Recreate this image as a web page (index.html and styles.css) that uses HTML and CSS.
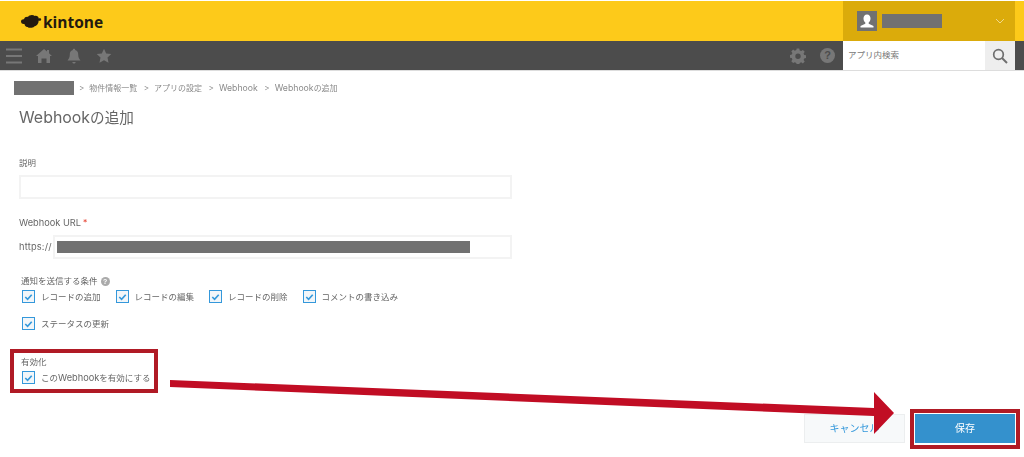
FILE: index.html
```html
<!DOCTYPE html>
<html lang="ja">
<head>
<meta charset="utf-8">
<title>Webhookの追加</title>
<link rel="stylesheet" href="styles.css">
</head>
<body>
<header class="topbar">
  <div class="logo">
    <svg class="logo-mark" viewBox="0 0 22 15" width="22" height="15"><path d="M1 7.500C1 5.700 2.800 5 4 5.300 4.300 3.300 6.500 2.500 8 3 9 .9 13 .4 14.800 2c2-.6 3.800.7 3.900 2.500.9-.5 2.500-.4 2.500.9s-1.600 1.700-2.500 1.200c-.1 3-1.800 5.500-4.500 5.800-1.400 1.800-5.200 1.900-6.500.5-1.800.2-3.200-1.500-3.200-3C3 10.400 1 9.500 1 7.500z" fill="#231a10"/></svg>
    <span class="logo-text">kintone</span>
  </div>
  <div class="user">
    <span class="avatar"><svg viewBox="0 0 20 20" width="20" height="20"><path d="M10 3.500c2.300 0 3.500 1.800 3.500 3.900 0 1.700-.8 3.300-1.800 4.100v1.300l4.800 2.200v1.500h-13v-1.500l4.800-2.200v-1.300c-1-.8-1.800-2.400-1.800-4.100 0-2.100 1.200-3.900 3.500-3.900z" fill="#fff"/></svg></span>
    <span class="redact redact-user"></span>
    <svg class="chevron" viewBox="0 0 10 6" width="10" height="6"><path d="M1 1l4 4 4-4" fill="none" stroke="#f0d98c" stroke-width="1"/></svg>
  </div>
</header>
<nav class="navbar">
  <div class="nav-left">
    <svg viewBox="0 0 16 16" width="16" height="16"><path d="M0 1.500h16M0 8h16M0 14.500h16" stroke="#777" stroke-width="1.800"/></svg>
    <svg viewBox="0 0 16 16" width="16" height="16"><path d="M8 1l3 2.600V2h2v3.300l3 2.700h-2v7h-3.500v-4.500h-5V15H2V8H0z" fill="#777"/></svg>
    <svg viewBox="0 0 16 16" width="16" height="16"><path d="M8 .8c.8 0 1.200.5 1.200 1.200 2.300.6 3 2.500 3 4.500 0 3 1 4.500 2.300 6H1.500c1.300-1.500 2.300-3 2.300-6 0-2 .7-3.900 3-4.500C6.800 1.300 7.200.8 8 .8zM6.300 14h3.400c-.2 1-.9 1.500-1.700 1.500S6.500 15 6.300 14z" fill="#777"/></svg>
    <svg viewBox="0 0 16 16" width="16" height="16"><path d="M8 .8l2.200 4.700 5.100.6-3.800 3.500 1 5.100L8 12.200l-4.500 2.500 1-5.100L.7 6.100l5.100-.6z" fill="#777"/></svg>
  </div>
  <div class="nav-right">
    <svg viewBox="0 0 16 16" width="16" height="16"><path d="M6.700.5h2.600l.4 2 1.500.6 1.700-1.100 1.800 1.800-1.100 1.700.6 1.500 2 .4v2.600l-2 .4-.6 1.500 1.100 1.700-1.800 1.800-1.700-1.100-1.500.6-.4 2H6.700l-.4-2-1.500-.6L3.100 15 1.300 13.200l1.100-1.700-.6-1.500-2-.4V7l2-.4.600-1.500L1.300 3.400l1.800-1.800 1.700 1.100 1.500-.6zM8 5.500a2.700 2.700 0 100 5.400 2.700 2.700 0 000-5.400z" fill="#777"/></svg>
    <span class="help">?</span>
    <div class="search">
      <span class="search-text">アプリ内検索</span>
      <span class="search-btn"><svg viewBox="0 0 16 16" width="16" height="16"><circle cx="6.500" cy="6.500" r="4.800" fill="none" stroke="#6e6e6e" stroke-width="1.700"/><path d="M10 10l5 5" stroke="#6e6e6e" stroke-width="2"/></svg></span>
    </div>
  </div>
</nav>
<main class="content">
  <div class="crumbs">
    <span class="redact redact-crumb"></span>
    <span class="sep">&gt;</span><span>物件情報一覧</span>
    <span class="sep">&gt;</span><span>アプリの設定</span>
    <span class="sep">&gt;</span><span class="lat">Webhook</span>
    <span class="sep">&gt;</span><span><span class="lat">Webhook</span>の追加</span>
  </div>
  <h1 class="title"><span class="lat">Webhook</span>の追加</h1>
  <form class="form">
    <div class="field field-desc">
      <div class="label">説明</div>
      <div class="input"></div>
    </div>
    <div class="field field-url">
      <div class="label"><span class="lat">Webhook URL</span><span class="req">*</span></div>
      <div class="url-row">
        <span class="url-prefix"><span class="lat">https://</span></span>
        <div class="input input-url"><span class="redact redact-url"></span></div>
      </div>
    </div>
    <div class="field field-cond">
      <div class="label">通知を送信する条件<span class="hint">?</span></div>
      <div class="checks">
        <span class="check"><span class="box"><svg viewBox="0 0 12 12" width="12" height="12"><path d="M2.500 6l2.500 2.500 4.500-5" fill="none" stroke="#3498db" stroke-width="1.800"/></svg></span>レコードの追加</span>
        <span class="check"><span class="box"><svg viewBox="0 0 12 12" width="12" height="12"><path d="M2.500 6l2.500 2.500 4.500-5" fill="none" stroke="#3498db" stroke-width="1.800"/></svg></span>レコードの編集</span>
        <span class="check"><span class="box"><svg viewBox="0 0 12 12" width="12" height="12"><path d="M2.500 6l2.500 2.500 4.500-5" fill="none" stroke="#3498db" stroke-width="1.800"/></svg></span>レコードの削除</span>
        <span class="check"><span class="box"><svg viewBox="0 0 12 12" width="12" height="12"><path d="M2.500 6l2.500 2.500 4.500-5" fill="none" stroke="#3498db" stroke-width="1.800"/></svg></span>コメントの書き込み</span>
        <span class="check"><span class="box"><svg viewBox="0 0 12 12" width="12" height="12"><path d="M2.500 6l2.500 2.500 4.500-5" fill="none" stroke="#3498db" stroke-width="1.800"/></svg></span>ステータスの更新</span>
      </div>
    </div>
    <div class="field field-enable">
      <div class="label">有効化</div>
      <span class="check"><span class="box"><svg viewBox="0 0 12 12" width="12" height="12"><path d="M2.500 6l2.500 2.500 4.500-5" fill="none" stroke="#3498db" stroke-width="1.800"/></svg></span><span>この<span class="lat">Webhook</span>を有効にする</span></span>
    </div>
    <div class="actions">
      <span class="btn btn-cancel">キャンセル</span>
      <span class="btn btn-save">保存</span>
    </div>
  </form>
</main>
<div class="mark mark-enable"></div>
<div class="mark mark-save"></div>
<svg class="arrow" viewBox="0 0 1024 457" width="1024" height="457"><path d="M170 380L874 408V392L894 413 874 434V416L170 387z" fill="#c10d24"/></svg>
</body>
</html>
```
FILE: styles.css
```css
* { box-sizing: border-box; }
html, body { margin: 0; padding: 0; }
body {
  width: 1024px;
  height: 457px;
  overflow: hidden;
  position: relative;
  background: #fff;
  font-family: Inter, "Noto Sans CJK JP", sans-serif;
  color: #666;
  font-size: 8.5px;
  line-height: 12px;
  padding-top: 1px;
  filter: blur(0.3px);
}
.lat { font-size: 1.09em; }
.topbar {
  height: 40px;
  background: #fdca1a;
  display: flex;
  justify-content: space-between;
  align-items: center;
  padding: 0 9px 0 20px;
}
.logo { display: flex; align-items: center; gap: 1px; }
.logo-text {
  font-family: "Open Sans", sans-serif;
  font-weight: 700;
  font-size: 15.5px;
  line-height: 22px;
  padding-top: 1px;
  color: #231a10;
}
.user {
  width: 172px;
  height: 40px;
  background: #dbab0b;
  display: flex;
  align-items: center;
  padding: 0 10px 0 14px;
}
.avatar {
  width: 20px;
  height: 20px;
  background: #717171;
  margin-right: 5px;
  display: flex;
}
.redact { display: block; background: #717171; }
.redact-user { width: 60px; height: 14px; }
.chevron { margin-left: auto; }
.navbar {
  height: 29px;
  background: #4c4c4c;
  display: flex;
  justify-content: space-between;
  padding-right: 9px;
}
.nav-left { display: flex; align-items: center; gap: 14px; padding-left: 6px; }
.nav-right { display: flex; align-items: center; }
.help {
  width: 15px;
  height: 15px;
  border-radius: 50%;
  background: #777;
  color: #4c4c4c;
  font: 700 11px/15px "Liberation Sans", sans-serif;
  text-align: center;
  margin: 0 8px 0 14px;
}
.search { display: flex; width: 172px; height: 29px; background: #fff; }
.search-text { flex: 1; padding-left: 5px; line-height: 29px; color: #777; }
.search-btn {
  width: 30px;
  background: #eee;
  display: flex;
  align-items: center;
  justify-content: center;
}
.content { border-top: 1px solid #ddd; padding: 10px 0 0 0; }
.crumbs {
  display: flex;
  align-items: center;
  height: 14px;
  padding-left: 14px;
  gap: 5px;
  font-size: 8px;
  color: #8a8a8a;
}
.sep { margin-left: 1.500px; }
.redact-crumb + .sep { margin-left: 0; }
.redact-crumb { width: 60px; height: 14px; }
.title {
  margin: 13px 0 0 19px;
  font-weight: 400;
  font-size: 14.600px;
  line-height: 20px;
  color: #666;
}
.form { padding-left: 19px; }
.label { height: 12px; }
.field-url .label { padding-top: 1px; }
.field-cond .label, .field-enable .label { padding-left: 2px; }
.field-desc { margin-top: 29px; }
.input {
  width: 493px;
  height: 24px;
  margin-top: 6px;
  background: #fff;
  border: 2px solid #f3f3f3;
}
.field-url { margin-top: 17px; }
.req { color: #e74c3c; margin-left: 2px; }
.url-row { display: flex; align-items: center; margin-top: 7px; }
.url-prefix { width: 34px; letter-spacing: .2px; }
.input-url { width: 459px; margin-top: 0; padding: 4px 2px; }
.redact-url { width: 413px; height: 12px; }
.field-cond { margin-top: 16px; }
.hint {
  display: inline-block;
  width: 9px;
  height: 9px;
  border-radius: 50%;
  background: #aaa;
  color: #fff;
  font: 700 7px/9px "Liberation Sans", sans-serif;
  text-align: center;
  margin-left: 3px;
}
.checks {
  display: flex;
  flex-wrap: wrap;
  width: 400px;
  padding-left: 3px;
  column-gap: 15px;
  row-gap: 14px;
  margin-top: 3px;
}
.check { display: inline-flex; align-items: center; height: 13px; }
.field-enable .check { margin-left: 3px; margin-top: 3px; }
.box {
  width: 13px;
  height: 13px;
  border: 1px solid #3498db;
  background: #f2f6f9;
  margin-right: 6px;
  display: flex;
  align-items: center;
  justify-content: center;
}
.checks .check:last-child { flex-basis: 100%; }
.field-enable { margin-top: 26px; }
.actions {
  display: flex;
  gap: 10px;
  justify-content: flex-end;
  padding-right: 9px;
  margin-top: 27px;
}
.btn {
  height: 29px;
  line-height: 29px;
  text-align: center;
  font-size: 10px;
}
.btn-cancel { width: 101px; background: #f7f9fa; border: 1px solid #eceeef; color: #3498db; line-height: 27px; }
.btn-save { width: 100px; background: #3491cd; color: #fff; }
.mark { position: absolute; border: 4px solid #b01a25; }
.mark-enable { left: 10px; top: 349px; width: 148px; height: 44px; }
.mark-save { left: 910px; top: 409px; width: 110px; height: 40px; }
.arrow { position: absolute; left: 0; top: 0; pointer-events: none; }
```
